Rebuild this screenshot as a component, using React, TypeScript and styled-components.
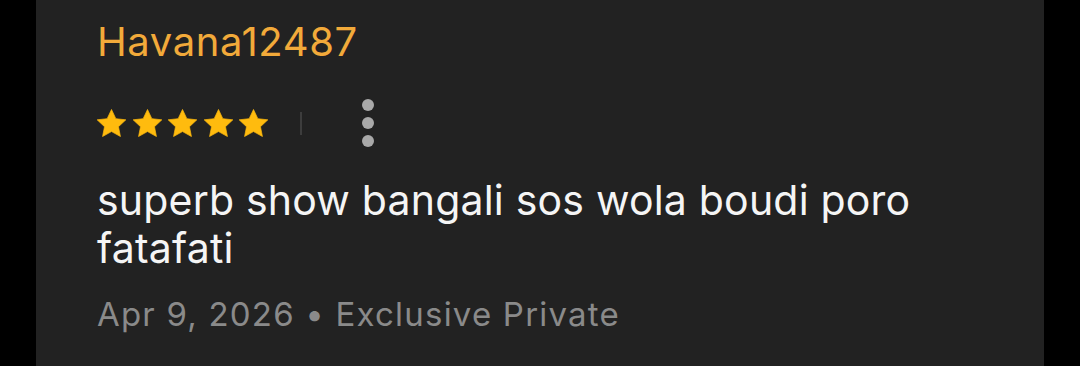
import React from 'react';
import styled, { createGlobalStyle } from 'styled-components';

const GlobalStyle = createGlobalStyle`
  html, body {
    margin: 0;
    padding: 0;
    background: #000;
  }
  body {
    font-family: Inter, "Noto Sans", sans-serif;
  }
`;

const Page = styled.div`
  width: 1080px;
  height: 366px;
  padding: 0 36px;
  box-sizing: border-box;
  overflow: hidden;
`;

const Card = styled.article`
  height: 100%;
  background: #222222;
  padding: 16px 40px 0 61px;
  box-sizing: border-box;
  display: flex;
  flex-direction: column;
`;

const Author = styled.div`
  color: #f2aa3a;
  font-size: 40px;
  line-height: 52px;
  letter-spacing: 0.6px;
`;

const RatingRow = styled.div`
  display: flex;
  align-items: center;
  height: 56px;
  margin-top: 27px;
`;

const Stars = styled.div`
  display: flex;
  gap: 6.5px;
`;

const Divider = styled.span`
  width: 2px;
  height: 23px;
  background: #3d3d3d;
  margin-left: 32px;
`;

const MoreButton = styled.button`
  background: none;
  border: none;
  padding: 0;
  margin-left: 60px;
  display: flex;
  flex-direction: column;
  gap: 6px;
  cursor: pointer;
`;

const Dot = styled.span`
  width: 12px;
  height: 12px;
  border-radius: 50%;
  background: #a9a9a9;
`;

const Body = styled.p`
  margin: 25px 0 0;
  color: #f5f5f5;
  font-size: 41px;
  line-height: 48px;
  letter-spacing: 0.2px;
  max-width: 860px;
`;

const Meta = styled.div`
  margin-top: 20px;
  color: #8a8a8a;
  font-size: 33px;
  line-height: 44px;
  letter-spacing: 1.2px;
`;

const Star = () => (
  <svg width="29" height="28" viewBox="1 0.5 22 21.2">
    <path
      d="M12 0.8l3.3 7 7.6 0.9-5.6 5.2 1.5 7.5L12 17.6l-6.8 3.8 1.5-7.5L1.1 8.7l7.6-0.9z"
      fill="#ffbb0e"
      stroke="#ffbb0e"
      strokeWidth="0.5"
      strokeLinejoin="round"
    />
  </svg>
);

const App = () => (
  <Page>
    <GlobalStyle />
    <Card>
      <Author>Havana12487</Author>
      <RatingRow>
        <Stars>
          {[0, 1, 2, 3, 4].map((i) => (
            <Star key={i} />
          ))}
        </Stars>
        <Divider />
        <MoreButton aria-label="More">
          <Dot />
          <Dot />
          <Dot />
        </MoreButton>
      </RatingRow>
      <Body>superb show bangali sos wola boudi poro fatafati</Body>
      <Meta>Apr 9, 2026 • Exclusive Private</Meta>
    </Card>
  </Page>
);

export default App;
